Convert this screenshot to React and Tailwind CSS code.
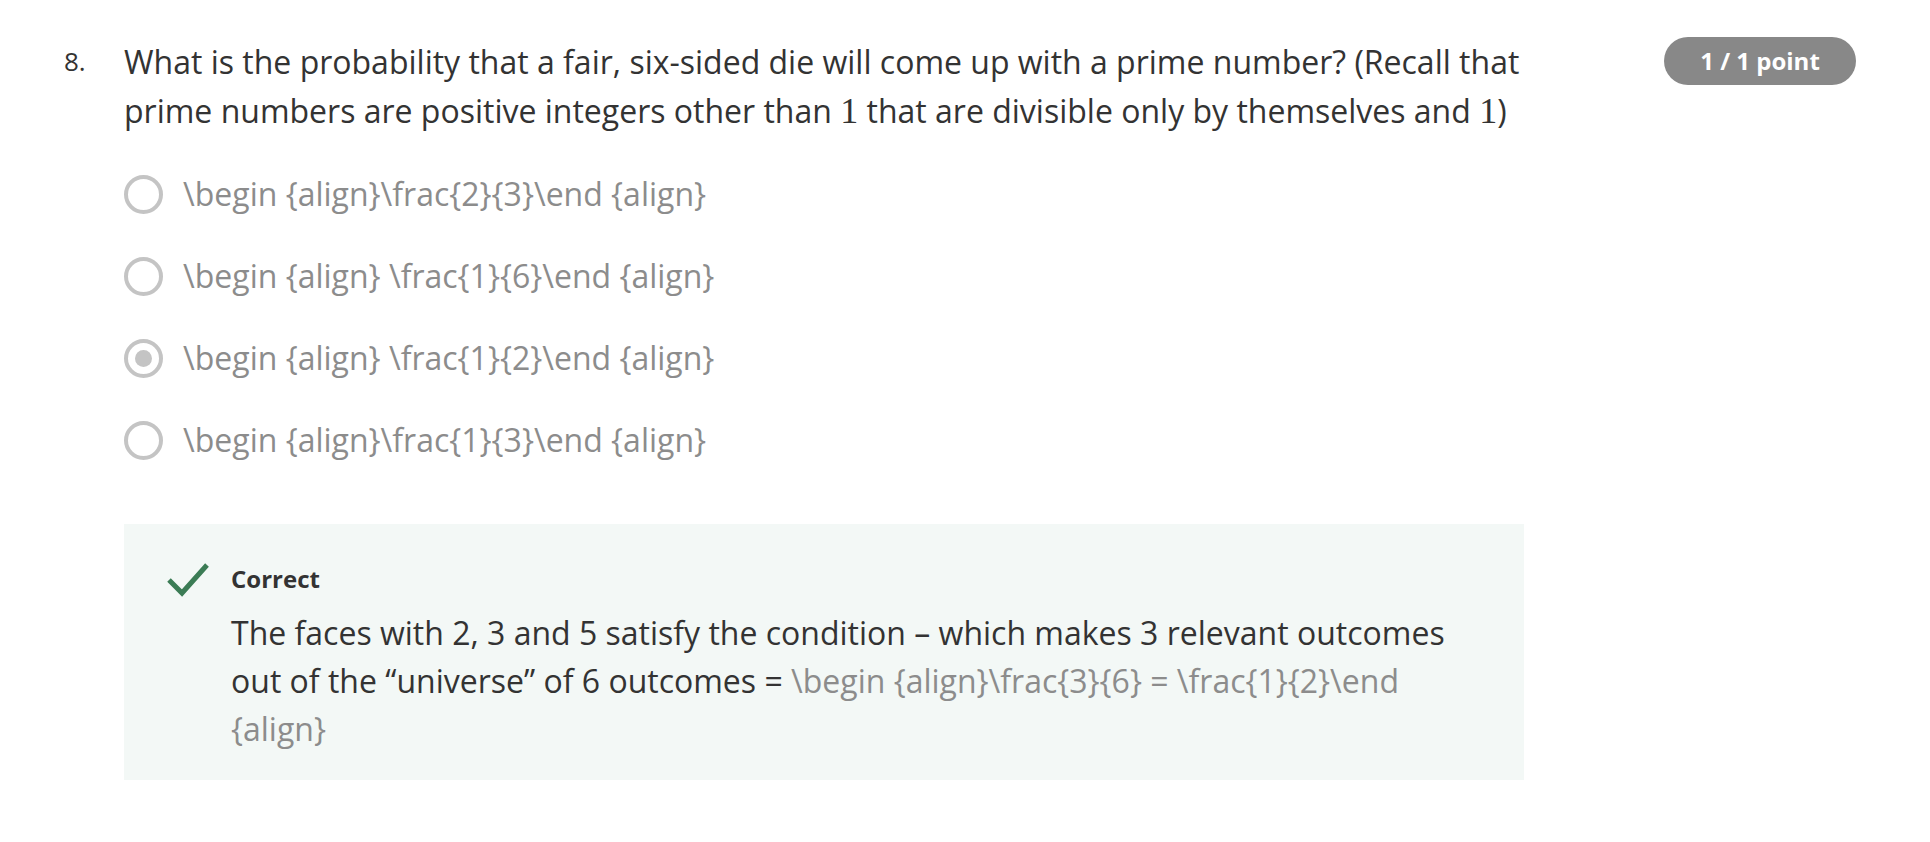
export default function App() {
  const options = [
    { label: "\\begin {align}\\frac{2}{3}\\end {align}", checked: false },
    { label: "\\begin {align} \\frac{1}{6}\\end {align}", checked: false },
    { label: "\\begin {align} \\frac{1}{2}\\end {align}", checked: true },
    { label: "\\begin {align}\\frac{1}{3}\\end {align}", checked: false },
  ];

  return (
    <div className="min-h-[842px] bg-white font-['Open_Sans',sans-serif]">
      <div className="flex pl-[64px] pr-[74px] pt-[37px]">
        {/* number */}
        <div className="w-[60px] shrink-0 text-[26px] leading-[49px] text-[#333]">8.</div>

        {/* question */}
        <div className="w-[1400px] shrink-0">
          <div className="text-[32px] leading-[49px] text-[#333]">
            What is the probability that a fair, six-sided die will come up with a prime number? (Recall that
            prime numbers are positive integers other than{" "}
            <span className="font-['Liberation_Serif',serif] text-[36px]">1</span> that are divisible only by
            themselves and <span className="font-['Liberation_Serif',serif] text-[36px]">1</span>)
          </div>

          <div className="mt-[17px] flex flex-col">
            {options.map((o, i) => (
              <div key={i} className="flex h-[82px] items-center">
                <div className="flex h-[39px] w-[39px] shrink-0 items-center justify-center rounded-full border-[4px] border-[#c4c4c4]">
                  {o.checked && <div className="h-[17px] w-[17px] rounded-full bg-[#c4c4c4]"></div>}
                </div>
                <span className="ml-[20px] text-[32px] text-[#8c8c8c]">{o.label}</span>
              </div>
            ))}
          </div>

          {/* feedback */}
          <div className="mt-[43px] flex bg-[#f3f8f6] pb-[27px] pl-[43px] pr-[43px] pt-[38px]">
            <svg width="42" height="34" viewBox="0 0 42 34" className="mt-[1px] shrink-0">
              <polyline points="2,17 15,30 40,2" fill="none" stroke="#3b7c55" strokeWidth="5" />
            </svg>
            <div className="ml-[22px]">
              <div className="text-[24px] font-bold leading-[34px] text-[#333]">Correct</div>
              <div className="mt-[13px] text-[32px] leading-[48px] text-[#333]">
                The faces with 2, 3 and 5 satisfy the condition – which makes 3 relevant outcomes out of the
                “universe” of 6 outcomes ={" "}
                <span className="text-[#8c8c8c]">\begin {"{align}"}\frac{"{3}{6}"} = \frac{"{1}{2}"}\end {"{align}"}</span>
              </div>
            </div>
          </div>
        </div>

        {/* score */}
        <div className="ml-auto">
          <div className="flex h-[48px] w-[192px] items-center justify-center rounded-full bg-[#888] text-[24px] font-bold text-white">
            1 / 1 point
          </div>
        </div>
      </div>
    </div>
  );
}
